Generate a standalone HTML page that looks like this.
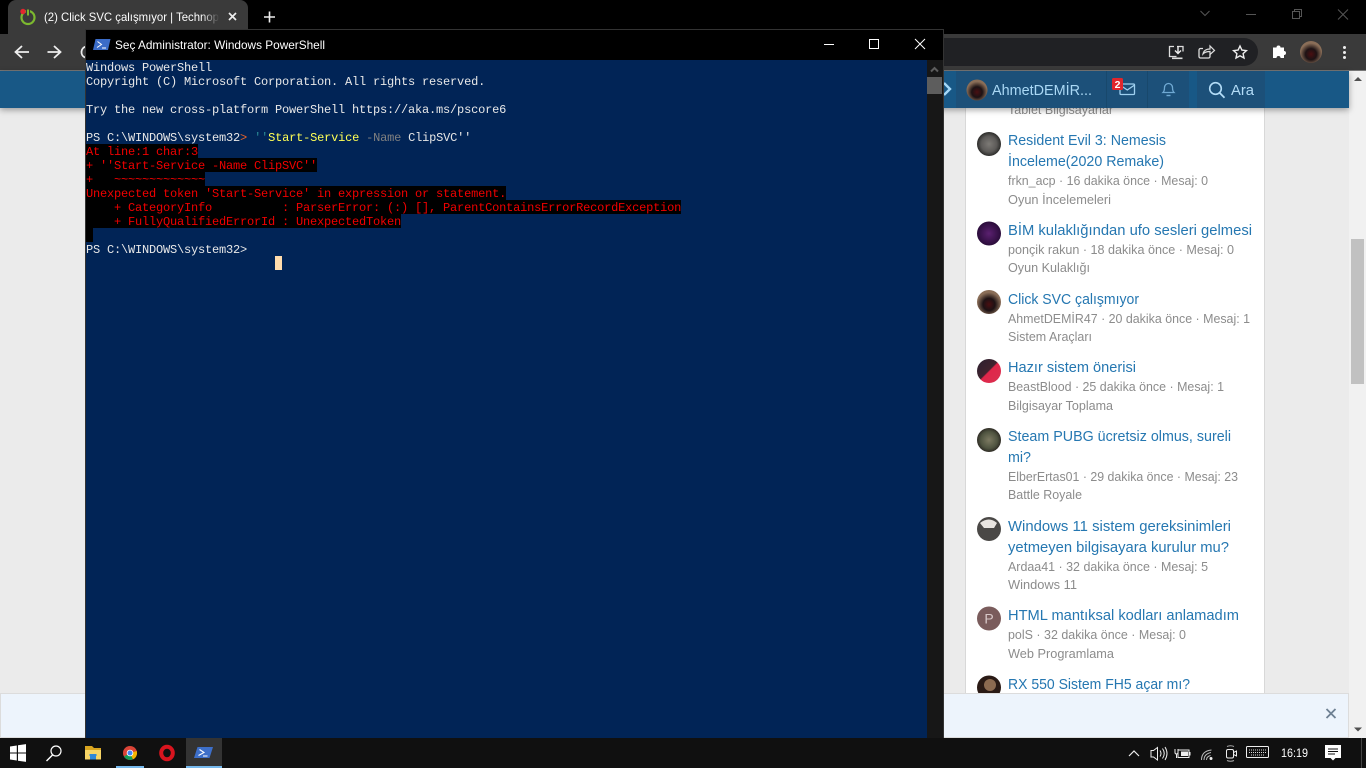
<!DOCTYPE html>
<html lang="tr"><head><meta charset="utf-8"><title>Click SVC çalışmıyor</title>
<style>
html,body{margin:0;padding:0;width:1366px;height:768px;overflow:hidden;background:#ebebeb}
*{box-sizing:border-box}
.a{position:absolute}
svg{position:absolute;left:0;top:0;overflow:visible}
text{font-family:"Liberation Sans","Noto Sans CJK SC",sans-serif}
#term{position:absolute;left:86px;top:60px;width:841px;height:678px;background:#012456;overflow:hidden}
#term div{position:absolute;left:0;height:14px;font:12px/16px "Liberation Mono",monospace;letter-spacing:-.2px;white-space:pre;color:#e8e8e8}
#term .e{background:#000;color:#f00000}
</style></head><body>
<!-- chrome top -->
<div class="a" style="left:0;top:0;width:1366px;height:34px;background:#000"></div>
<div class="a" style="left:8px;top:0;width:240px;height:36px;background:#3a3a3a;border-radius:8px 8px 0 0"></div>
<div class="a" style="left:0;top:34px;width:1366px;height:36px;background:#3a3a3a"></div>
<div class="a" style="left:0;top:70px;width:1366px;height:1px;background:#777"></div>
<div class="a" style="left:100px;top:38px;width:1158px;height:28px;background:#202124;border-radius:14px"></div>
<!-- page -->
<div class="a" style="left:0;top:71px;width:1349px;height:667px;background:#ebebeb"></div>
<div class="a" style="left:1349px;top:71px;width:17px;height:667px;background:#f1f1f1"></div>
<div class="a" style="left:1351px;top:239px;width:13px;height:145px;background:#c1c1c1"></div>
<div class="a" style="left:965px;top:100px;width:300px;height:600px;background:#fff;border:1px solid #d8d8d8;border-width:0 1px"></div>
<svg width="1366" height="768">
<g fill="#2577b1" font-size="15">
<text x="1008" y="145" textLength="158" lengthAdjust="spacingAndGlyphs">Resident Evil 3: Nemesis</text>
<text x="1008" y="166" textLength="156" lengthAdjust="spacingAndGlyphs">İnceleme(2020 Remake)</text>
<text x="1008" y="235" textLength="244" lengthAdjust="spacingAndGlyphs">BİM kulaklığından ufo sesleri gelmesi</text>
<text x="1008" y="304" textLength="131" lengthAdjust="spacingAndGlyphs">Click SVC çalışmıyor</text>
<text x="1008" y="372" textLength="128" lengthAdjust="spacingAndGlyphs">Hazır sistem önerisi</text>
<text x="1008" y="441" textLength="223" lengthAdjust="spacingAndGlyphs">Steam PUBG ücretsiz olmus, sureli</text>
<text x="1008" y="462" textLength="23" lengthAdjust="spacingAndGlyphs">mi?</text>
<text x="1008" y="531" textLength="223" lengthAdjust="spacingAndGlyphs">Windows 11 sistem gereksinimleri</text>
<text x="1008" y="552" textLength="221" lengthAdjust="spacingAndGlyphs">yetmeyen bilgisayara kurulur mu?</text>
<text x="1008" y="620" textLength="231" lengthAdjust="spacingAndGlyphs">HTML mantıksal kodları anlamadım</text>
<text x="1008" y="689" textLength="182" lengthAdjust="spacingAndGlyphs">RX 550 Sistem FH5 açar mı?</text>
</g>
<g fill="#8c8c8c" font-size="12.5">
<text x="1008" y="114" textLength="105" lengthAdjust="spacingAndGlyphs">Tablet Bilgisayarlar</text>
<text x="1008" y="185" textLength="200" lengthAdjust="spacingAndGlyphs">frkn_acp · 16 dakika önce · Mesaj: 0</text>
<text x="1008" y="204" textLength="103" lengthAdjust="spacingAndGlyphs">Oyun İncelemeleri</text>
<text x="1008" y="254" textLength="226" lengthAdjust="spacingAndGlyphs">ponçik rakun · 18 dakika önce · Mesaj: 0</text>
<text x="1008" y="272" textLength="82" lengthAdjust="spacingAndGlyphs">Oyun Kulaklığı</text>
<text x="1008" y="323" textLength="242" lengthAdjust="spacingAndGlyphs">AhmetDEMİR47 · 20 dakika önce · Mesaj: 1</text>
<text x="1008" y="341" textLength="84" lengthAdjust="spacingAndGlyphs">Sistem Araçları</text>
<text x="1008" y="391" textLength="216" lengthAdjust="spacingAndGlyphs">BeastBlood · 25 dakika önce · Mesaj: 1</text>
<text x="1008" y="410" textLength="105" lengthAdjust="spacingAndGlyphs">Bilgisayar Toplama</text>
<text x="1008" y="481" textLength="230" lengthAdjust="spacingAndGlyphs">ElberErtas01 · 29 dakika önce · Mesaj: 23</text>
<text x="1008" y="499" textLength="74" lengthAdjust="spacingAndGlyphs">Battle Royale</text>
<text x="1008" y="571" textLength="200" lengthAdjust="spacingAndGlyphs">Ardaa41 · 32 dakika önce · Mesaj: 5</text>
<text x="1008" y="589" textLength="69" lengthAdjust="spacingAndGlyphs">Windows 11</text>
<text x="1008" y="639" textLength="178" lengthAdjust="spacingAndGlyphs">polS · 32 dakika önce · Mesaj: 0</text>
<text x="1008" y="658" textLength="106" lengthAdjust="spacingAndGlyphs">Web Programlama</text>
</g>
<defs>
<radialGradient id="gc"><stop offset="0" stop-color="#7d7a76"/><stop offset=".65" stop-color="#5c5a58"/><stop offset="1" stop-color="#2c2c2a"/></radialGradient>
<linearGradient id="gr" x1="0" y1="0" x2="1" y2="1"><stop offset="0" stop-color="#2a2030"/><stop offset=".48" stop-color="#40222e"/><stop offset=".52" stop-color="#e0264a"/><stop offset="1" stop-color="#d8304f"/></linearGradient>
<radialGradient id="gs"><stop offset="0" stop-color="#7d7a62"/><stop offset=".7" stop-color="#4f5440"/><stop offset="1" stop-color="#2f2c25"/></radialGradient>
<radialGradient id="gp"><stop offset="0" stop-color="#5b2070"/><stop offset="1" stop-color="#2a0c3a"/></radialGradient>
<radialGradient id="ga" cx=".5" cy=".6"><stop offset="0" stop-color="#4a1012"/><stop offset=".5" stop-color="#1d1214"/><stop offset="1" stop-color="#8a6e58"/></radialGradient>
</defs>
<circle cx="989" cy="144" r="12" fill="url(#gc)"/>
<circle cx="989" cy="233.5" r="12" fill="url(#gp)"/>
<circle cx="989" cy="302" r="12" fill="url(#ga)"/>
<circle cx="989" cy="371" r="12" fill="url(#gr)"/>
<circle cx="989" cy="440" r="12" fill="url(#gs)"/>
<circle cx="989" cy="529" r="12" fill="#4a4846"/><path d="M980 523q9-7 17 0l-3 5h-10z" fill="#e8e4e0"/>
<circle cx="989" cy="618.5" r="12" fill="#7a5c5c"/><text x="989" y="623.5" font-size="14" fill="#d8c8c8" text-anchor="middle">P</text>
<circle cx="989" cy="687.5" r="12" fill="#2a1a15"/><circle cx="990" cy="685" r="6" fill="#8c6a50"/>
</svg>
<!-- notice -->
<div class="a" style="left:0;top:693px;width:1349px;height:45px;background:#edf4fc;border:1px solid #dcdcdc"></div>
<!-- nav -->
<div class="a" style="left:0;top:71px;width:1349px;height:37px;background:#185886;box-shadow:0 2px 6px rgba(0,0,0,.35)"></div>
<div class="a" style="left:956px;top:71px;width:233px;height:37px;background:#1c5079"></div>
<div class="a" style="left:1106px;top:71px;width:1px;height:37px;background:#18486c"></div>
<div class="a" style="left:1147px;top:71px;width:1px;height:37px;background:#18486c"></div>
<div class="a" style="left:1197px;top:71px;width:68px;height:37px;background:#1c5079"></div>
<svg width="1366" height="768">
<path d="M944 83l6 6-6 6" fill="none" stroke="#a5d8f8" stroke-width="2.4"/>
<circle cx="977" cy="90" r="10.500" fill="url(#ga)"/>
<text x="992" y="95" font-size="15" fill="#aad8f5" textLength="100" lengthAdjust="spacingAndGlyphs">AhmetDEMİR...</text>
<rect x="1120" y="84" width="14.5" height="10.5" rx="1" fill="none" stroke="#9fd0f0" stroke-width="1.3"/><path d="M1120 85l7.3 5 7.3-5" fill="none" stroke="#9fd0f0" stroke-width="1.3"/>
<rect x="1112" y="78" width="11" height="12" rx="1.5" fill="#e0262c"/><text x="1117.5" y="88" font-size="10.5" font-weight="bold" fill="#fff" text-anchor="middle">2</text>
<path d="M1163 92.5c1.500-1.500 1.500-3 1.500-5a4 4 0 0 1 8 0c0 2 0 3.500 1.500 5z" fill="none" stroke="#6fa9d3" stroke-width="1.3"/><path d="M1166.500 95.500h4" stroke="#6fa9d3" stroke-width="1.4"/>
<circle cx="1215.500" cy="88.500" r="5.800" fill="none" stroke="#b3dcf7" stroke-width="1.600"/><path d="M1219.800 93l4.700 4.700" stroke="#b3dcf7" stroke-width="1.800"/>
<text x="1231" y="95" font-size="15" fill="#b3dcf7" textLength="23" lengthAdjust="spacingAndGlyphs">Ara</text>
<!-- page scroll arrows -->
<path d="M1354 81l4-4 4 4z" fill="#505050"/><path d="M1354 727.500l4 4 4-4z" fill="#505050"/>
<!-- notice close -->
<path d="M1326.500 709l9 9M1335.500 709l-9 9" stroke="#6e8092" stroke-width="1.800"/>
<!-- tab -->
<circle cx="28" cy="17.500" r="6.500" fill="none" stroke="#7cb82f" stroke-width="2.200"/><path d="M28 8v7" stroke="#3a3a3a" stroke-width="4"/><path d="M28 9.500v6" stroke="#7cb82f" stroke-width="2"/><circle cx="23" cy="11.500" r="2.700" fill="#e3262e"/>
<defs><linearGradient id="fade"><stop offset=".9" stop-color="#fff"/><stop offset="1" stop-color="#3a3a3a"/></linearGradient></defs>
<text x="44" y="21" font-size="12" fill="url(#fade)" textLength="175" lengthAdjust="spacingAndGlyphs">(2) Click SVC çalışmıyor | Technop</text>
<path d="M229 13l7 7M236 13l-7 7" stroke="#eee" stroke-width="1.700"/>
<path d="M269.500 11.500v11M264 17h11" stroke="#eee" stroke-width="1.600"/>
<!-- nav arrows -->
<path d="M29 52H16M22 46l-6.500 6 6.500 6" fill="none" stroke="#eee" stroke-width="1.800"/>
<path d="M47.500 52H60M54 46l6.500 6-6.500 6" fill="none" stroke="#eee" stroke-width="1.800"/>
<path d="M86 46.500a5.800 5.800 0 0 0-1 11" fill="none" stroke="#eee" stroke-width="1.800"/>
<!-- win controls dim -->
<path d="M1200.500 11l4.500 4.500 4.500-4.500" fill="none" stroke="#555" stroke-width="1"/>
<path d="M1246 14.500h10" stroke="#555" stroke-width="1"/>
<path d="M1292.500 11.500v7h7v-7zM1294.500 11.500v-2h7v7h-2" fill="none" stroke="#555" stroke-width="1"/>
<path d="M1338 9.500l10 10M1348 9.500l-10 10" stroke="#555" stroke-width="1"/>
<!-- toolbar icons -->
<path d="M1174 46.500h-4.500v10h7M1177 46.500h6v5" fill="none" stroke="#ddd" stroke-width="1.300"/><path d="M1178 46v7M1175 50.500l3 3 3-3" fill="none" stroke="#eee" stroke-width="1.400"/><path d="M1172 57.500h10.500v1.600h-10.500z" fill="#ddd"/>
<path d="M1203 48.500h-2.500a1.500 1.500 0 0 0-1.500 1.500v6.500a1.500 1.500 0 0 0 1.500 1.500h8a1.500 1.500 0 0 0 1.500-1.500v-2" fill="none" stroke="#ddd" stroke-width="1.300"/><path d="M1203 54c.5-3 3-5 7-5v-3l4.500 4.500-4.500 4v-3c-3 0-5.500.8-7 2.500z" fill="none" stroke="#ddd" stroke-width="1.200"/>
<path d="M1240 46l1.900 4.100 4.500.5-3.300 3 .9 4.400-4-2.200-4 2.200.9-4.400-3.300-3 4.500-.5z" fill="none" stroke="#eee" stroke-width="1.400"/>
<path d="M1273 50h3.500a2 2 0 1 1 4 0h3.500v3.500a2 2 0 1 1 0 4v3h-3.500a2 2 0 1 0-4 0h-3.500z" fill="#fff" transform="translate(0 -2.500)"/>
<circle cx="1311" cy="52" r="11" fill="url(#ga)"/>
<circle cx="1344.500" cy="47.500" r="1.500" fill="#eee"/><circle cx="1344.500" cy="52.500" r="1.500" fill="#eee"/><circle cx="1344.500" cy="57.500" r="1.500" fill="#eee"/>
</svg>
<!-- powershell window -->
<div class="a" style="left:85px;top:29px;width:859px;height:709px;background:#000;border:1px solid #333"></div>
<div id="term">
<div style="top:0">Windows PowerShell</div>
<div style="top:14px">Copyright (C) Microsoft Corporation. All rights reserved.</div>
<div style="top:42px">Try the new cross-platform PowerShell https://aka.ms/pscore6</div>
<div style="top:70px">PS C:\WINDOWS\system32<span style="color:#e8632a">&gt;</span> <span style="color:#2a8a96">''</span><span style="color:#ffff55">Start-Service</span> <span style="color:#808080">-Name</span> <span style="color:#e6e6e6">ClipSVC''</span></div>
<div class="e" style="top:84px">At line:1 char:3</div>
<div class="e" style="top:98px">+ ''Start-Service -Name ClipSVC''</div>
<div class="e" style="top:112px">+   ~~~~~~~~~~~~~</div>
<div class="e" style="top:126px">Unexpected token 'Start-Service' in expression or statement.</div>
<div class="e" style="top:140px">    + CategoryInfo          : ParserError: (:) [], ParentContainsErrorRecordException</div>
<div class="e" style="top:154px">    + FullyQualifiedErrorId : UnexpectedToken</div>
<div class="e" style="top:168px;width:7px"> </div>
<div style="top:182px">PS C:\WINDOWS\system32&gt;</div>
<i class="a" style="left:189px;top:196px;width:7px;height:14px;background:#ffdcac"></i>
</div>
<div class="a" style="left:927px;top:60px;width:16px;height:678px;background:#171717"></div>
<div class="a" style="left:927px;top:77px;width:15px;height:17px;background:#5d5d5d"></div>
<svg width="1366" height="768">
<path d="M931 71.500l3.500-3.500 3.500 3.500" fill="none" stroke="#5d5d5d" stroke-width="2"/>
<path d="M95.500 39h15l-2.500 11h-15z" fill="#3b6cc8"/><path d="M97.500 41.500l4 3-4.500 3" fill="none" stroke="#fff" stroke-width="1"/><path d="M102 48h4" stroke="#fff" stroke-width="1"/>
<text x="115" y="49" font-size="12" fill="#fff" textLength="210" lengthAdjust="spacingAndGlyphs">Seç Administrator: Windows PowerShell</text>
<path d="M824 44.500h10" stroke="#fff" stroke-width="1"/>
<rect x="869.500" y="39.500" width="9" height="9" fill="none" stroke="#fff" stroke-width="1"/>
<path d="M915 39l10 10M925 39l-10 10" stroke="#fff" stroke-width="1"/>
</svg>
<!-- taskbar -->
<div class="a" style="left:0;top:738px;width:1366px;height:30px;background:#101010"></div>
<div class="a" style="left:186px;top:738px;width:36px;height:30px;background:#333"></div>
<div class="a" style="left:116px;top:766px;width:28px;height:2px;background:#76b9ed"></div>
<div class="a" style="left:186px;top:766px;width:36px;height:2px;background:#76b9ed"></div>
<svg width="1366" height="768">
<path d="M10 746.500l6.800-1v7h-6.800zM18 745.300l8-1.200v8.400h-8zM10 753.500h6.800v7l-6.800-1zM18 753.500h8v8.400l-8-1.200z" fill="#fff"/>
<circle cx="56" cy="751" r="5" fill="none" stroke="#fff" stroke-width="1.200"/><path d="M52.500 755l-6 6" stroke="#fff" stroke-width="1.400"/>
<path d="M85 746h7l2 2h7v3H85z" fill="#d9a520"/><path d="M85 750h16v9.500H85z" fill="#f7d566"/><path d="M90 759.500v-3.500h6v3.500" fill="#2f88d8"/><path d="M89.500 754h7v2h-7z" fill="#2f88d8"/>
<circle cx="130" cy="753" r="7" fill="#db4437"/><path d="M130 753l-6 3.500A7 7 0 0 0 133 759.300z" fill="#0f9d58"/><path d="M130 753l6.800-2A7 7 0 0 1 133 759.300z" fill="#f4b400"/><circle cx="130" cy="753" r="3.300" fill="#fff"/><circle cx="130" cy="753" r="2.500" fill="#4285f4"/>
<ellipse cx="167" cy="753" rx="5.800" ry="6.300" fill="none" stroke="#d8141e" stroke-width="4"/>
<path d="M197.500 747h15.500l-3.500 11h-15.500z" fill="#3d6fc9"/><path d="M199.500 749.500l4.500 3-5.500 3" fill="none" stroke="#fff" stroke-width="1.100"/><path d="M203 756h4.500" stroke="#fff" stroke-width="1"/>
<path d="M1129 756l5-5 5 5" fill="none" stroke="#eee" stroke-width="1.200"/>
<path d="M1151 750.500h2.500l4-3v12.500l-4-3h-2.500z" fill="none" stroke="#eee" stroke-width="1"/><path d="M1160 750.500q2 3 0 6M1162.500 748.500q3.500 5 0 10M1165 747q4 6.500 0 13" fill="none" stroke="#eee" stroke-width="1"/>
<rect x="1178" y="750" width="11" height="7.500" fill="none" stroke="#eee" stroke-width="1"/><rect x="1181" y="751.500" width="7" height="4.500" fill="#eee"/><rect x="1189" y="752" width="1.500" height="3.500" fill="#eee"/><path d="M1175 749v3.500a1.500 1.500 0 0 0 3 0V749M1176.500 754v4" fill="none" stroke="#eee" stroke-width="1"/>
<path d="M1201.500 760q0-9 10-10M1204 760q0-6 7-7.500M1206.500 760q0-3.500 4-4.500" fill="none" stroke="#bbb" stroke-width="1"/><circle cx="1211" cy="758.500" r="1.500" fill="#eee"/>
<rect x="1226.500" y="749.500" width="7" height="8.500" rx="1.500" fill="none" stroke="#eee" stroke-width="1"/><path d="M1233.500 752.500l3-1.500v5l-3-1.500" fill="none" stroke="#eee" stroke-width="1"/><path d="M1227 746.500q3.500-1.500 7 0M1227 760.500q3.500 1.500 7 0" fill="none" stroke="#aaa" stroke-width="1"/>
<rect x="1246.500" y="746.500" width="22" height="11" rx="1" fill="none" stroke="#eee" stroke-width="1"/><path d="M1249 750h17M1249 752.500h17M1251 755h13" stroke="#ddd" stroke-width="1" stroke-dasharray="1 1"/>
<text x="1294.500" y="757" font-size="12" fill="#fff" text-anchor="middle" textLength="27" lengthAdjust="spacingAndGlyphs">16:19</text>
<path d="M1325 745h16v13h-5.500l-2.500 2.500-2.500-2.500h-5.500z" fill="#fff"/><path d="M1328 749h10M1328 751.500h10M1328 754h7" stroke="#101010" stroke-width="1"/>
<path d="M1361.500 738v30" stroke="#444" stroke-width="1"/>
</svg>
</body></html>
